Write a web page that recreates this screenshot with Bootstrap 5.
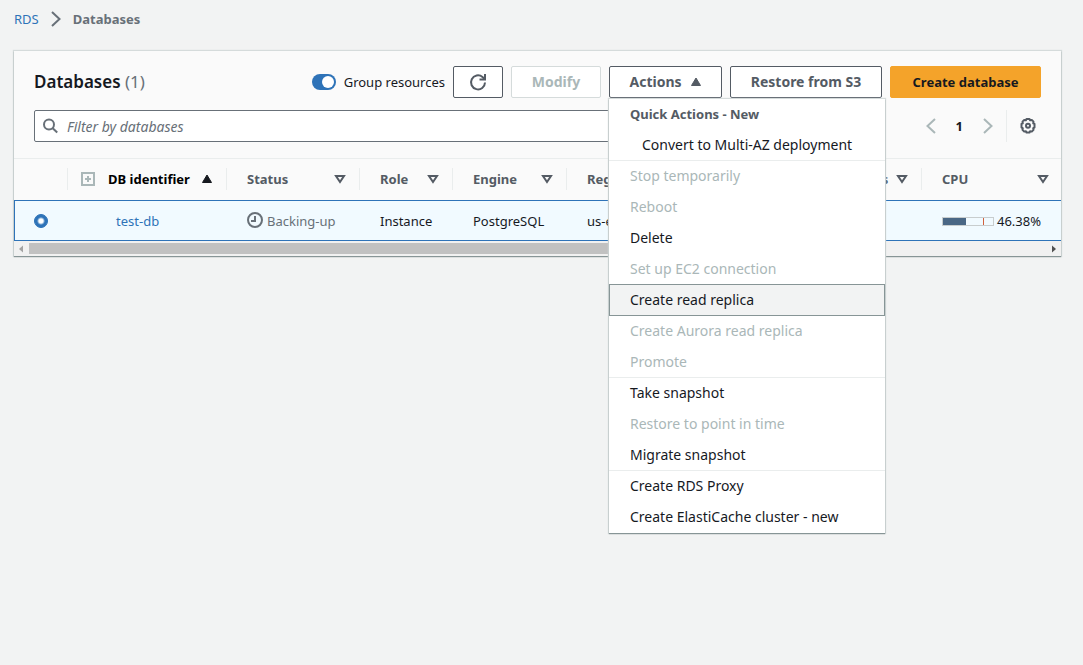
<!DOCTYPE html>
<html lang="en">
<head>
<meta charset="utf-8">
<meta name="viewport" content="width=device-width, initial-scale=1">
<title>RDS - Databases</title>
<link rel="stylesheet" href="https://cdn.jsdelivr.net/npm/bootstrap@5.3.0/dist/css/bootstrap.min.css">
<style>
  body { background: #f2f3f3; color: #16191f; font-family: "Noto Sans", sans-serif; font-size: 13px; line-height: 20px; }
  a { color: #2e73b8; text-decoration: none; }
  svg { display: block; flex: none; }
  .crumbs { padding: 9px 14px 0; gap: 12px; color: #687078; }
  .panel { margin: 22px 22px 0 14px; background: #fafafa; box-shadow: 0 1px 1px 0 #879596, 0 0 1px 1px #d5dbdb; }
  .toolbar { padding: 15px 20px 0; }
  .toolbar h1 { font-size: 17px; line-height: 24px; margin: 0; font-weight: 600; }
  .toolbar h1 span { font-weight: 400; color: #687078; }
  .btn { --bs-btn-padding-y: 5px; --bs-btn-padding-x: 8px; --bs-btn-font-size: 14px; --bs-btn-line-height: 20px; --bs-btn-font-weight: 700; --bs-btn-border-radius: 2px; --bs-btn-disabled-opacity: 1; white-space: nowrap; }
  .btn-plain { --bs-btn-color: #545b64; --bs-btn-bg: #fff; --bs-btn-border-color: #545b64; --bs-btn-hover-color: #16191f; --bs-btn-hover-bg: #fafafa; --bs-btn-hover-border-color: #16191f; --bs-btn-disabled-color: #aab7b8; --bs-btn-disabled-bg: #fff; --bs-btn-disabled-border-color: #d5dbdb; }
  .btn-create { --bs-btn-font-size: 13px; --bs-btn-color: #16191f; --bs-btn-bg: #f4a32a; --bs-btn-border-color: #f4a32a; --bs-btn-hover-bg: #ec7211; --bs-btn-hover-border-color: #ec7211; }
  .w-refresh { width: 50px; } .w-modify { width: 90px; } .w-actions { width: 113px; } .w-restore { width: 152px; } .w-create { width: 151px; }
  .form-switch { min-height: 0; padding: 0; margin: 0; }
  .form-switch .form-check-input { width: 24px; height: 16px; margin: 0; border: 0; }
  .form-check-input:checked { background-color: #2e73b8; border-color: #2e73b8; }
  .filters { padding: 12px 20px 16px; }
  .search { border: 1px solid #687078; border-radius: 2px; background: #fff; height: 32px; padding: 0 7px; gap: 8px; color: #687078; max-width: 700px; }
  .search input { border: 0; outline: 0; padding: 2px 0 0; font-size: 14px; color: #16191f; background: transparent; }
  .search input::placeholder { color: #687078; font-style: italic; opacity: 1; }
  .bare { border: 0; background: transparent; padding: 0; color: #aab7b8; }
  .bare.settings { color: #545b64; }
  .settings-box { border-left: 1px solid #eaeded; height: 32px; padding: 0 4px 0 12px; margin-left: 13px; }
  .scroller { overflow: hidden; border-top: 1px solid #eaeded; }
  .db-table { table-layout: fixed; width: 100%; border-collapse: separate; border-spacing: 0; }
  .db-table th { padding: 9px 0 10px; }
  .th-in { display: flex; align-items: center; justify-content: space-between; height: 22px; padding: 0 13px 0 20px; border-right: 1px solid #eaeded; color: #545b64; white-space: nowrap; }
  .db-table th:last-child .th-in { border: 0; padding-right: 12px; }
  .db-table td { background: #f1faff; border: solid #2e73b8; border-width: 1px 0; padding: 10px 0 9px 20px; height: 41px; white-space: nowrap; }
  .db-table td:first-child { border-left-width: 1px; }
  .backing { color: #687078; }
  .c-pick { width: 54px; } .c-id { width: 159px; } .c-status { width: 133px; } .c-role { width: 93px; } .c-engine { width: 114px; } .c-region { width: 143px; } .c-actions { width: 102px; } .c-cpu { width: 139px; }
  .pick { width: 14px; height: 14px; margin: 0 0 0 -1px; display: block; }
  .pick:checked[type=radio] { background-image: radial-gradient(#fff 0 2px, transparent 4px); }
  .meter { width: 52px; height: 9px; border: 1px solid #c8cdce; margin-right: 3px; display: flex; justify-content: space-between; }
  .meter-fill { background: #4a6785; }
  .meter-tick { width: 1px; margin-right: 9px; background: #d1603d; }
  .hbar { height: 15px; padding: 2px 0; background: #f1f1f1; }
  .hbar-thumb { width: 62%; height: 11px; background: #c1c1c1; }
  .actions-menu { --bs-dropdown-padding-y: 0; --bs-dropdown-font-size: 14px; --bs-dropdown-border-radius: 0; --bs-dropdown-border-width: 0; --bs-dropdown-item-padding-x: 21px; --bs-dropdown-item-padding-y: 5px; --bs-dropdown-link-color: #16191f; --bs-dropdown-link-active-color: #16191f; --bs-dropdown-link-active-bg: #f2f3f3; --bs-dropdown-link-disabled-color: #aab7b8; --bs-dropdown-header-color: #545b64; --bs-dropdown-header-padding-x: 21px; --bs-dropdown-header-padding-y: 5px; width: 276px; top: 100%; left: 0; margin-top: 1px; box-shadow: 0 1px 1px 0 #879596, 0 0 1px 1px #d5dbdb; }
  .actions-menu .dropdown-item, .actions-menu .dropdown-header { height: 31px; line-height: 20px; }
  .actions-menu .dropdown-header { font-size: 13px; }
  .actions-menu .dropdown-item.nested { padding-left: 33px; }
  .actions-menu .ruled { border-bottom: 1px solid #eaeded; }
  .actions-menu .dropdown-item.active { height: 32px; margin-top: -1px; padding-top: 6px; outline: 1px solid #879596; outline-offset: -1px; }
</style>
</head>
<body class="min-vh-100">
<nav aria-label="Breadcrumb" class="crumbs d-flex align-items-center">
  <a href="#">RDS</a>
  <svg width="10" height="16" viewBox="0 0 10 16" fill="none" stroke="currentColor" stroke-width="2"><path d="M1 1l7.500 7L1 15"/></svg>
  <strong>Databases</strong>
</nav>

<main class="panel">
  <header class="toolbar d-flex align-items-center gap-2">
    <h1 class="me-auto">Databases <span>(1)</span></h1>
    <div class="form-check form-switch d-flex align-items-center gap-2">
      <input class="form-check-input" type="checkbox" role="switch" id="group" checked>
      <label for="group">Group resources</label>
    </div>
    <button type="button" class="btn btn-plain w-refresh d-flex justify-content-center" aria-label="Refresh">
      <svg width="18" height="20" viewBox="0 0 18 20" fill="none" stroke="currentColor" stroke-width="2"><path d="M16 10.500A7 7 0 1 1 13.500 5L15.500 7"/><path d="M16 2v5.500h-5.500"/></svg>
    </button>
    <button type="button" class="btn btn-plain w-modify" disabled>Modify</button>
    <div class="dropdown">
      <button type="button" class="btn btn-plain w-actions d-flex align-items-center justify-content-center gap-2" aria-expanded="true">Actions
        <svg width="12" height="10" viewBox="0 0 12 10" fill="currentColor"><path d="M6 1l4.500 7.500h-9z" stroke="currentColor" stroke-linejoin="round"/></svg>
      </button>
      <ul class="dropdown-menu actions-menu show">
        <li><h2 class="dropdown-header fw-bold">Quick Actions - New</h2></li>
        <li><a class="dropdown-item nested ruled" href="#">Convert to Multi-AZ deployment</a></li>
        <li><a class="dropdown-item disabled" href="#">Stop temporarily</a></li>
        <li><a class="dropdown-item disabled" href="#">Reboot</a></li>
        <li><a class="dropdown-item" href="#">Delete</a></li>
        <li><a class="dropdown-item disabled" href="#">Set up EC2 connection</a></li>
        <li><a class="dropdown-item active" href="#">Create read replica</a></li>
        <li><a class="dropdown-item disabled" href="#">Create Aurora read replica</a></li>
        <li><a class="dropdown-item ruled disabled" href="#">Promote</a></li>
        <li><a class="dropdown-item" href="#">Take snapshot</a></li>
        <li><a class="dropdown-item disabled" href="#">Restore to point in time</a></li>
        <li><a class="dropdown-item ruled" href="#">Migrate snapshot</a></li>
        <li><a class="dropdown-item" href="#">Create RDS Proxy</a></li>
        <li><a class="dropdown-item" href="#">Create ElastiCache cluster - new</a></li>
      </ul>
    </div>
    <button type="button" class="btn btn-plain w-restore">Restore from S3</button>
    <button type="button" class="btn btn-create w-create">Create database</button>
  </header>

  <div class="filters d-flex align-items-center">
    <div class="search d-flex align-items-center flex-grow-1">
      <svg width="17" height="16" viewBox="0 0 17 16" fill="none" stroke="currentColor" stroke-width="2"><circle cx="7" cy="6.500" r="5"/><path d="M10.700 10.200l4.500 4.300"/></svg>
      <input type="search" class="flex-grow-1" placeholder="Filter by databases" aria-label="Filter by databases">
    </div>
    <div class="d-flex align-items-center ms-auto">
      <button type="button" class="bare" aria-label="Previous page"><svg width="10" height="16" viewBox="0 0 10 16" fill="none" stroke="currentColor" stroke-width="2"><path d="M9 1L1.500 8 9 15"/></svg></button>
      <strong class="px-3 mx-1">1</strong>
      <button type="button" class="bare" aria-label="Next page"><svg width="10" height="16" viewBox="0 0 10 16" fill="none" stroke="currentColor" stroke-width="2"><path d="M1 1l7.500 7L1 15"/></svg></button>
      <div class="settings-box d-flex align-items-center">
        <button type="button" class="bare settings" aria-label="Preferences"><svg width="18" height="18" viewBox="0 0 18 18" fill="none" stroke="currentColor" stroke-width="2" stroke-linejoin="round"><path d="M7.500 2h3l.6 1.200 1.700-.3 1.700 1.700-.3 1.700 1.300.7v3.500l-1.300.6.3 1.800-1.700 1.700-1.700-.4-.6 1.300h-3l-.6-1.300-1.700.4-1.700-1.700.3-1.800-1.300-.6V7l1.300-.7-.3-1.700 1.700-1.700 1.700.3z"/><circle cx="9" cy="8.800" r="2"/></svg></button>
      </div>
    </div>
  </div>

  <div class="scroller">
    <table class="db-table">
      <colgroup><col class="c-pick"><col class="c-id"><col class="c-status"><col class="c-role"><col class="c-engine"><col class="c-region"><col><col class="c-actions"><col class="c-cpu"></colgroup>
      <thead>
        <tr>
          <th><div class="th-in"></div></th>
          <th><div class="th-in text-body-emphasis ps-0">
            <span class="d-flex align-items-center gap-2 ms-1 ps-2"><svg width="16" height="14" viewBox="0 0 16 14" fill="none" stroke="#aab7b8" stroke-width="2"><path d="M2 1h12v12H2zM8 4v6M5 7h6"/></svg><span class="ps-1">DB identifier</span></span>
            <svg width="12" height="10" viewBox="0 0 12 10" fill="#16191f"><path d="M6 1l4.500 7.500h-9z" stroke="#16191f" stroke-linejoin="round"/></svg></div></th>
          <th><div class="th-in">Status<svg width="12" height="10" viewBox="0 0 12 10" fill="none" stroke="currentColor" stroke-width="2"><path d="M2 2h8L6 8z"/></svg></div></th>
          <th><div class="th-in">Role<svg width="12" height="10" viewBox="0 0 12 10" fill="none" stroke="currentColor" stroke-width="2"><path d="M2 2h8L6 8z"/></svg></div></th>
          <th><div class="th-in">Engine<svg width="12" height="10" viewBox="0 0 12 10" fill="none" stroke="currentColor" stroke-width="2"><path d="M2 2h8L6 8z"/></svg></div></th>
          <th><div class="th-in">Region</div></th>
          <th><div class="th-in"></div></th>
          <th><div class="th-in">Actions<svg width="12" height="10" viewBox="0 0 12 10" fill="none" stroke="currentColor" stroke-width="2"><path d="M2 2h8L6 8z"/></svg></div></th>
          <th><div class="th-in">CPU<svg width="12" height="10" viewBox="0 0 12 10" fill="none" stroke="currentColor" stroke-width="2"><path d="M2 2h8L6 8z"/></svg></div></th>
        </tr>
      </thead>
      <tbody>
        <tr>
          <td><input class="form-check-input pick" type="radio" name="db" aria-label="Select test-db" checked></td>
          <td><a href="#" class="ms-4 ps-1">test-db</a></td>
          <td><span class="backing d-flex align-items-center gap-1"><svg width="16" height="18" viewBox="0 0 16 18" fill="none" stroke="currentColor" stroke-width="2"><circle cx="8" cy="8" r="7"/><path d="M8 4v5H4"/></svg>Backing-up</span></td>
          <td>Instance</td>
          <td>PostgreSQL</td>
          <td>us-east-1</td>
          <td></td>
          <td></td>
          <td><div class="d-flex align-items-center"><div class="meter"><span class="meter-fill" style="width:46.38%"></span><span class="meter-tick"></span></div>46.38%</div></td>
        </tr>
      </tbody>
    </table>
    <div class="hbar d-flex align-items-center justify-content-between">
      <svg width="15" height="10" viewBox="0 0 15 10" fill="#a3a3a3"><path d="M9 1.500v7L5 5z"/></svg>
      <div class="hbar-thumb me-auto"></div>
      <svg width="15" height="10" viewBox="0 0 15 10" fill="#505050"><path d="M6 1.500v7L10 5z"/></svg>
    </div>
  </div>
</main>
<script src="https://cdn.jsdelivr.net/npm/bootstrap@5.3.0/dist/js/bootstrap.bundle.min.js"></script>
</body>
</html>
